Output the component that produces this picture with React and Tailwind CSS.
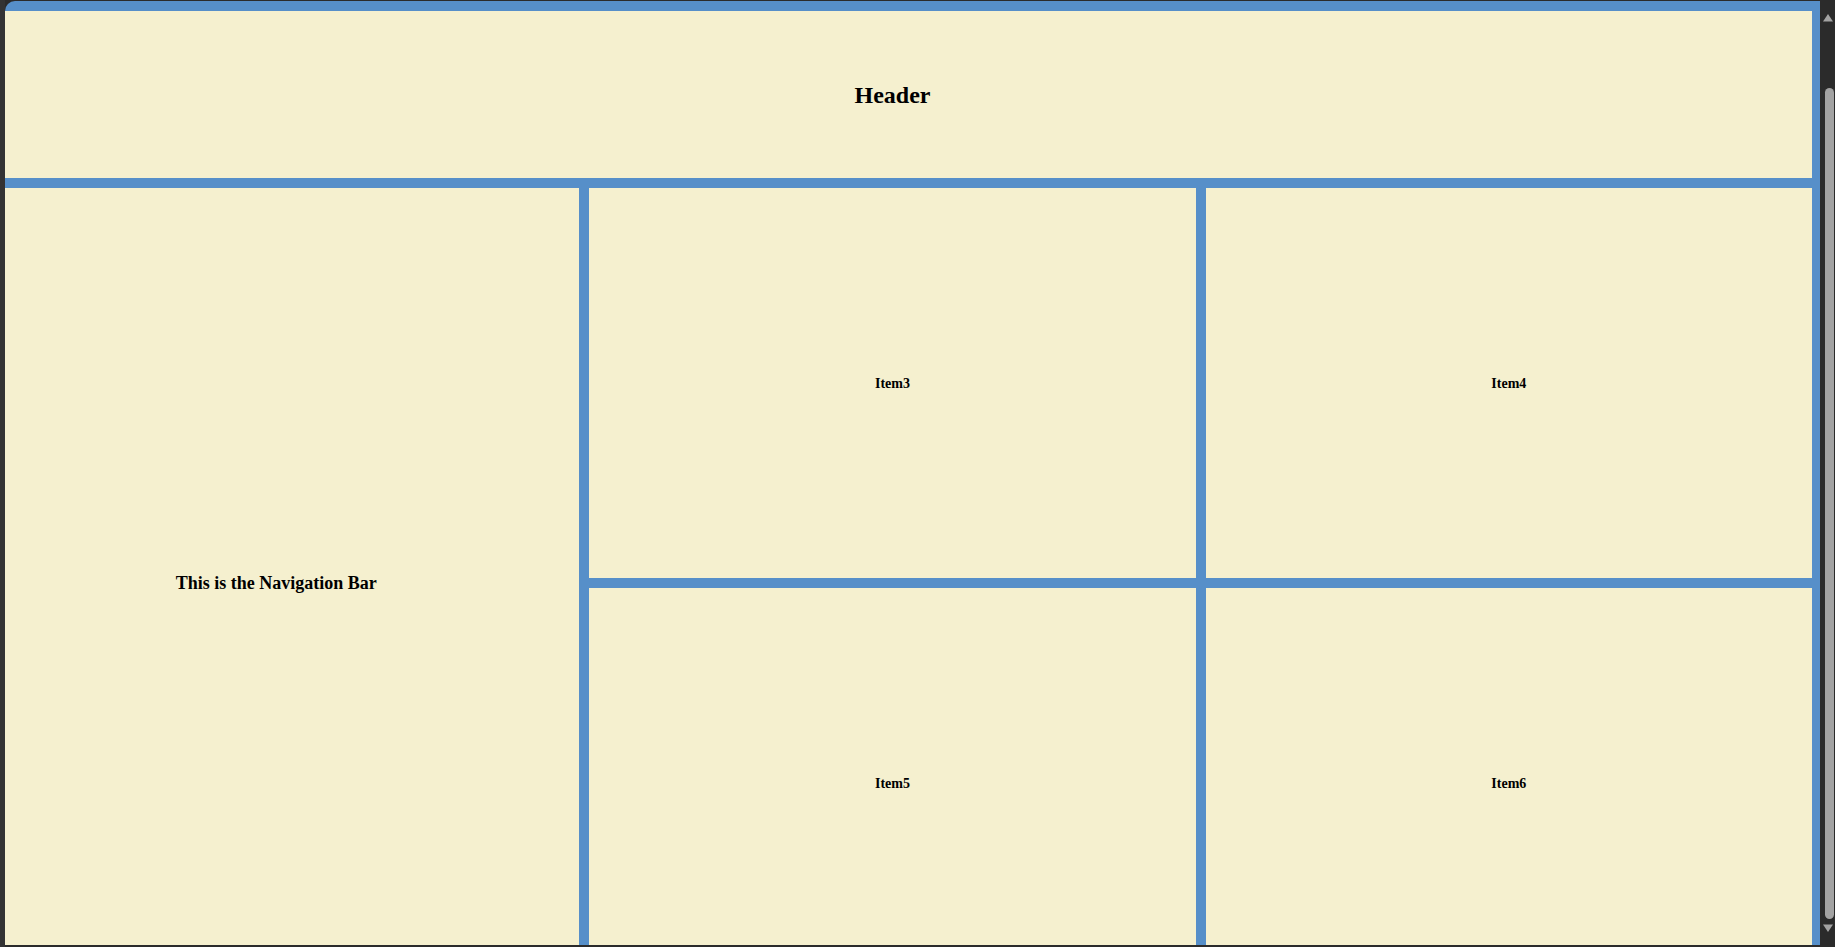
export default function App() {
  const cell = "bg-[#f5f0cf] flex items-center justify-center font-bold text-black";

  return (
    <div
      className="h-screen w-full flex bg-[#2b2b2b] overflow-hidden"
      style={{ fontFamily: '"Liberation Serif", "Times New Roman", serif' }}
    >
      {/* window edge */}
      <div className="w-[5px] shrink-0 bg-[#333333]" />

      {/* page */}
      <div className="flex-1 mt-px mb-[2px] rounded-tl-[10px] overflow-hidden bg-[#568fc9] pt-[10px] pr-[8px]">
        <div className="-ml-[32px] grid grid-cols-3 grid-rows-[167px_390px_390px] gap-[10px]">
          <div className={`${cell} col-span-3 text-[24px]`}>
            <h1>Header</h1>
          </div>
          <div className={`${cell} row-span-2 text-[18px]`}>
            <h3>This is the Navigation Bar</h3>
          </div>
          <div className={`${cell} text-[14px]`}>Item3</div>
          <div className={`${cell} text-[14px]`}>Item4</div>
          <div className={`${cell} text-[14px]`}>Item5</div>
          <div className={`${cell} text-[14px]`}>Item6</div>
        </div>
      </div>

      {/* scrollbar */}
      <div className="w-[15px] shrink-0 bg-[#2b2b2b] flex flex-col items-center pt-[12px] pb-[13px]">
        <svg width="12" height="11" viewBox="0 0 12 11">
          <path d="M6 2 L11 9.5 L1 9.5 Z" fill="#a3a3a3" />
        </svg>
        <div className="flex-1 w-full flex justify-end pr-px pt-[65px] pb-[4px]">
          <div className="w-[9px] rounded-full bg-[#a3a3a3]" />
        </div>
        <svg width="12" height="11" viewBox="0 0 12 11">
          <path d="M1 1.5 L11 1.5 L6 9 Z" fill="#a3a3a3" />
        </svg>
      </div>
    </div>
  );
}
